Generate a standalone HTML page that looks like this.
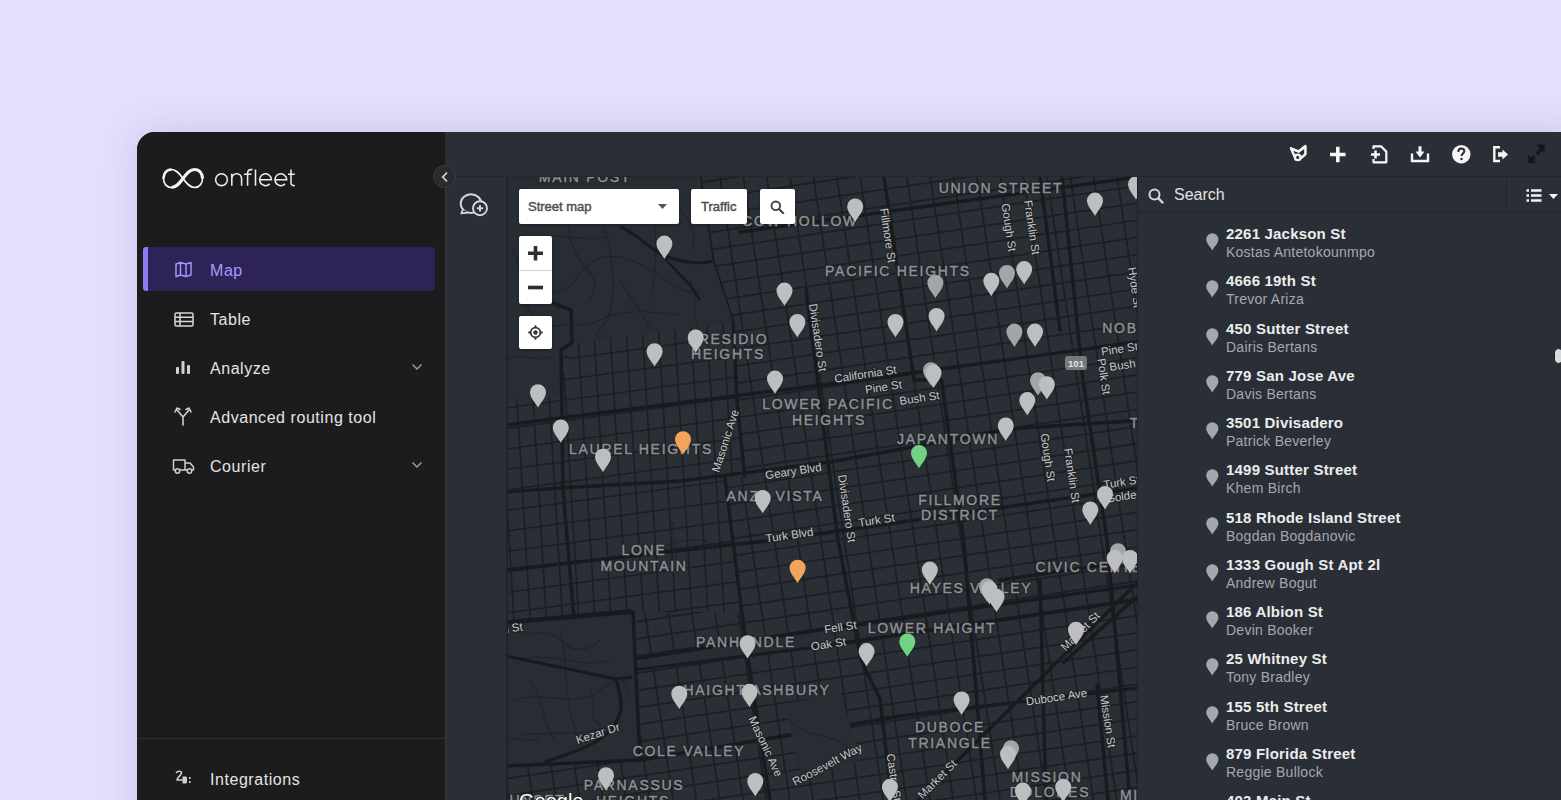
<!DOCTYPE html>
<html><head><meta charset="utf-8">
<style>
*{margin:0;padding:0;box-sizing:border-box}
html,body{width:1561px;height:800px;overflow:hidden;background:#e3dffc;font-family:"Liberation Sans",sans-serif}
.abs{position:absolute}
#app{position:absolute;left:137px;top:132px;width:1440px;height:700px;border-radius:18px 0 0 0;overflow:hidden;box-shadow:0 0 36px rgba(80,60,160,0.16);background:#1c1c1d}
#side{position:absolute;left:0;top:0;width:308px;height:700px;background:#1c1c1d}
.nav{position:absolute;left:0;width:308px;height:44px;color:#e4e4e4;font-size:16px;letter-spacing:0.55px}
.nav .t{position:absolute;left:73px;top:15px;line-height:18px;white-space:nowrap}
.nav svg{position:absolute}
#top{position:absolute;left:308px;top:0;width:1132px;height:45px;background:#2a2f37;border-bottom:1px solid #23272d}
#lcol{position:absolute;left:308px;top:45px;width:61px;height:655px;background:#2a2f37;border-left:1px solid #34373b}
#map{position:absolute;left:369px;top:45px;width:631px;height:623px;background:#2c3036;overflow:hidden}
#mapctl{position:absolute;left:369px;top:45px;width:300px;height:200px}
.ctl{background:#fff;border-radius:2px;box-shadow:0 1px 3px rgba(0,0,0,0.3)}
#rp{position:absolute;left:1000px;top:45px;width:440px;height:655px;background:#2a2f37;border-left:1px solid #1e2126}
.it{position:absolute;left:68px;width:360px;height:47px}
.it .a{position:absolute;left:20px;top:-2px;font-size:15px;font-weight:700;color:#ececec;letter-spacing:0.2px;white-space:nowrap;line-height:18px}
.it .b{position:absolute;left:20px;top:16px;font-size:14px;color:#a6a8ab;letter-spacing:0.25px;white-space:nowrap;line-height:18px}
.it svg{position:absolute;left:-0.5px;top:6px}
</style></head>
<body>
<div id="app">
  <div id="side">
    <!-- logo -->
    <svg class="abs" style="left:18px;top:30px" width="140" height="35" viewBox="155 162 140 35">
      <path d="M183 178.5 C187 173,190 169.5,194.5 169.5 C199.5 169.5,202.5 173.5,202.5 178.5 C202.5 183.5,199.5 187.5,194.5 187.5 C190 187.5,187 184,183 178.5 C179 173,176 169.5,171.5 169.5 C166.5 169.5,163.5 173.5,163.5 178.5 C163.5 183.5,166.5 187.5,171.5 187.5 C176 187.5,179 184,183 178.5Z" fill="none" stroke="#f4f4f4" stroke-width="1.7"/>
      <path d="M171.5 187.5 C176 187.5,179 184,183 178.5 C187 173,190 169.5,194.5 169.5 C199.5 169.5,202.5 173.5,202.5 178.5" fill="none" stroke="#f4f4f4" stroke-width="3"/>
      <path d="M163.5 178.5 C163.5 173.5,166.5 169.5,171.5 169.5" fill="none" stroke="#f4f4f4" stroke-width="2.6"/>
      <g fill="none" stroke="#ececec" stroke-width="1.55">
        <circle cx="221.5" cy="179.7" r="5.9"/>
        <path d="M231.8 185.7 V173.7 M231.8 179.5 C231.8 175.5,234 173.7,236.8 173.7 C239.8 173.7,241.6 175.5,241.6 179.5 V185.7"/>
        <path d="M247.6 185.7 V173.5 C247.6 170.8,249 169.6,251 169.6 H252.5 M244 174.2 H251.5"/>
        <path d="M255.5 169.4 V185.7"/>
        <path d="M259.6 179.7 H271.4 A5.9 5.9 0 1 0 269.7 183.9"/>
        <path d="M274.9 179.7 H286.7 A5.9 5.9 0 1 0 285 183.9"/>
        <path d="M291 169.4 V183 C291 185,292 185.7,294.8 185.7 M288 174.2 H294.8"/>
      </g>
    </svg>
    <div class="abs" style="left:8px;top:115px;width:290px;height:44px;background:#2e2357;border-radius:4px"></div>
    <div class="abs" style="left:6px;top:115px;width:5px;height:44px;background:#8b7cf5;border-radius:3px 0 0 3px"></div>
    <div class="nav" style="top:115px;color:#a89bf6">
      <svg style="left:38px;top:14px" width="17" height="17" viewBox="0 0 17 17"><path d="M1 3 L5.5 1.5 L11 3 L16 1.5 V14 L11 15.5 L5.5 14 L1 15.5Z M5.5 1.5 V14 M11 3 V15.5" fill="none" stroke="#a394f7" stroke-width="1.5" stroke-linejoin="round"/></svg>
      <span class="t">Map</span>
    </div>
    <div class="nav" style="top:164px">
      <svg style="left:37px;top:16px" width="20" height="15" viewBox="0 0 20 15"><rect x="1" y="1" width="18" height="13" rx="1.5" fill="none" stroke="#d8d8d8" stroke-width="1.5"/><path d="M1 5.3H19M1 9.6H19M6 1V14" stroke="#d8d8d8" stroke-width="1.5"/></svg>
      <span class="t">Table</span>
    </div>
    <div class="nav" style="top:213px">
      <svg style="left:38px;top:15px" width="16" height="15" viewBox="0 0 16 15"><rect x="1" y="7" width="3" height="7" rx="1" fill="#d0d0d0"/><rect x="6.5" y="1" width="3" height="13" rx="1" fill="#d0d0d0"/><rect x="12" y="5" width="3" height="9" rx="1" fill="#d0d0d0"/></svg>
      <span class="t">Analyze</span>
      <svg style="left:274px;top:18px" width="12" height="8" viewBox="0 0 12 8"><path d="M1.5 1.5 L6 6 L10.5 1.5" fill="none" stroke="#9a9a9a" stroke-width="1.5"/></svg>
    </div>
    <div class="nav" style="top:262px">
      <svg style="left:37px;top:12px" width="18" height="20" viewBox="0 0 18 20"><path d="M9 19 V11 L3 4 M9 11 L15 4 M1 6 L3 2 L6 3.5 M12 3.5 L15 2 L17 6" fill="none" stroke="#cfcfcf" stroke-width="1.6" stroke-linecap="round" stroke-linejoin="round"/></svg>
      <span class="t">Advanced routing tool</span>
    </div>
    <div class="nav" style="top:311px">
      <svg style="left:35px;top:15px" width="23" height="16" viewBox="0 0 23 16"><path d="M1.5 2 H13 V12 H1.5Z M13 5 H18 L21.5 9 V12 H13" fill="none" stroke="#cfcfcf" stroke-width="1.5" stroke-linejoin="round"/><circle cx="5.5" cy="13" r="2.2" fill="#1c1c1d" stroke="#cfcfcf" stroke-width="1.5"/><circle cx="17.5" cy="13" r="2.2" fill="#1c1c1d" stroke="#cfcfcf" stroke-width="1.5"/></svg>
      <span class="t">Courier</span>
      <svg style="left:274px;top:18px" width="12" height="8" viewBox="0 0 12 8"><path d="M1.5 1.5 L6 6 L10.5 1.5" fill="none" stroke="#9a9a9a" stroke-width="1.5"/></svg>
    </div>
    <div class="abs" style="left:0;top:606px;width:308px;height:1px;background:#2e2e30"></div>
    <div class="nav" style="top:624px">
      <svg style="left:37px;top:13px" width="20" height="18" viewBox="0 0 20 18"><path d="M2.5 3.5 C3.5 1.8,7.5 1.8,7.5 4 C7.5 6,3 8.5,3 11 H8" fill="none" stroke="#d0d0d0" stroke-width="1.6" stroke-linecap="round" stroke-linejoin="round"/><path d="M8.5 7.5 h3 a1.5 1.5 0 0 1 1.5 1.5 v4 a1.5 1.5 0 0 1 -1.5 1.5 h-3z" fill="#d0d0d0"/><circle cx="15.8" cy="9" r="1" fill="#d0d0d0"/><circle cx="15.8" cy="13" r="1" fill="#d0d0d0"/></svg>
      <span class="t">Integrations</span>
    </div>
  </div>

  <div id="top">
    <svg class="abs" style="left:0;top:0" width="1132" height="45" viewBox="445 132 1132 45">
      <!-- fox -->
      <path d="M1291 148.3 L1298.6 151.4 L1305.4 146 V154.3 L1300.8 158.2 M1291 148.3 L1295 157.6" fill="none" stroke="#f4f4f4" stroke-width="2.5" stroke-linejoin="round" stroke-linecap="round"/>
      <path d="M1292.5 149.5 L1298.6 152 L1304.5 148" fill="none" stroke="#f4f4f4" stroke-width="1.5"/>
      <circle cx="1297.7" cy="157.4" r="2.7" fill="none" stroke="#f4f4f4" stroke-width="2.3"/>
      <!-- plus -->
      <path d="M1337.8 146.8 V162.2 M1330 154.5 H1345.6" stroke="#f6f6f6" stroke-width="3.6"/>
      <!-- file plus -->
      <path d="M1373.5 149 V146.3 H1381 L1386.3 151.6 V162.3 H1373.5 V159" fill="none" stroke="#f6f6f6" stroke-width="2.2" stroke-linejoin="round"/>
      <path d="M1375.5 150.5 V158.5 M1371 154.5 H1380" stroke="#f6f6f6" stroke-width="2.6"/>
      <!-- download -->
      <path d="M1412 153.5 V161 H1428 V153.5" fill="none" stroke="#f6f6f6" stroke-width="2.4"/>
      <path d="M1420 146.3 V153" stroke="#f6f6f6" stroke-width="3"/>
      <path d="M1415.5 151.5 H1424.5 L1420 157.5Z" fill="#f6f6f6"/>
      <!-- help -->
      <circle cx="1461.3" cy="154.2" r="9.2" fill="#f6f6f6"/>
      <path d="M1458.3 152 C1458.3 149.6,1459.8 148.5,1461.3 148.5 C1463 148.5,1464.3 149.6,1464.3 151.3 C1464.3 153.4,1461.5 153.5,1461.5 156" fill="none" stroke="#2a2e34" stroke-width="2"/>
      <circle cx="1461.5" cy="159" r="1.2" fill="#2a2e34"/>
      <!-- sign out -->
      <path d="M1500 147.3 H1494.3 V161 H1500" fill="none" stroke="#f6f6f6" stroke-width="2.4"/>
      <path d="M1498 152.2 H1502.5 V149.5 L1508 154.5 L1502.5 159.5 V156.8 H1498Z" fill="#f6f6f6"/>
      <!-- expand -->
      <path d="M1529.5 161.5 L1534.5 156.5 M1537 154 L1542.5 148" stroke="#15171b" stroke-width="3.4"/>
      <path d="M1536 144.5 H1544.6 V153Z M1527.8 154.5 V163.3 H1536.5Z" fill="#15171b"/>
    </svg>
  </div>
  <div id="lcol">
    <div class="abs" style="left:3px;top:3px;width:52px;height:52px;border-bottom:1px solid #262a30"></div>
    <svg class="abs" style="left:-1px;top:0" width="61" height="80" viewBox="445 177 61 80">
      <ellipse cx="471" cy="203.6" rx="10.3" ry="9.4" fill="none" stroke="#d4d6d8" stroke-width="1.9"/>
      <path d="M463 209.5 L461.3 213.4 L468 212.6" fill="#2a2f37" stroke="#d4d6d8" stroke-width="1.8" stroke-linejoin="round" stroke-linecap="round"/>
      <circle cx="480" cy="208.2" r="7" fill="#2a2f37" stroke="#d4d6d8" stroke-width="1.9"/>
      <path d="M480 205 V211.4 M476.8 208.2 H483.2" stroke="#d4d6d8" stroke-width="1.9"/>
    </svg>
  </div>
  <div id="map"><svg width="631" height="623" viewBox="506 177 631 623" style="position:absolute;left:0;top:0">
<rect x="506" y="177" width="631" height="623" fill="#2a2f36"/>
<defs>
<clipPath id="cA"><path d="M506,398 L561,395 L572,343 L733,322 L745,476 L725,478 L740,612 L633,612 L506,623Z"/></clipPath>
<clipPath id="cB"><path clip-rule="evenodd" d="M506,177 L1137,177 L1137,800 L506,800Z M506,398 L561,395 L572,343 L733,322 L745,476 L725,478 L740,612 L633,612 L506,623Z"/></clipPath>
</defs>
<g clip-path="url(#cB)"><g transform="rotate(-8.5 821.0 488.0)" stroke="#1b1e23" stroke-width="1.7">
<line x1="466.8" y1="80" x2="466.8" y2="900"/>
<line x1="489.9" y1="80" x2="489.9" y2="900"/>
<line x1="513.0" y1="80" x2="513.0" y2="900"/>
<line x1="536.1" y1="80" x2="536.1" y2="900"/>
<line x1="559.2" y1="80" x2="559.2" y2="900"/>
<line x1="582.3" y1="80" x2="582.3" y2="900"/>
<line x1="605.4" y1="80" x2="605.4" y2="900"/>
<line x1="628.5" y1="80" x2="628.5" y2="900"/>
<line x1="651.6" y1="80" x2="651.6" y2="900"/>
<line x1="674.7" y1="80" x2="674.7" y2="900"/>
<line x1="697.8" y1="80" x2="697.8" y2="900"/>
<line x1="720.9" y1="80" x2="720.9" y2="900"/>
<line x1="744.0" y1="80" x2="744.0" y2="900"/>
<line x1="767.1" y1="80" x2="767.1" y2="900"/>
<line x1="790.2" y1="80" x2="790.2" y2="900"/>
<line x1="813.3" y1="80" x2="813.3" y2="900"/>
<line x1="836.4" y1="80" x2="836.4" y2="900"/>
<line x1="859.5" y1="80" x2="859.5" y2="900"/>
<line x1="882.6" y1="80" x2="882.6" y2="900"/>
<line x1="905.7" y1="80" x2="905.7" y2="900"/>
<line x1="928.8" y1="80" x2="928.8" y2="900"/>
<line x1="951.9" y1="80" x2="951.9" y2="900"/>
<line x1="975.0" y1="80" x2="975.0" y2="900"/>
<line x1="998.1" y1="80" x2="998.1" y2="900"/>
<line x1="1021.2" y1="80" x2="1021.2" y2="900"/>
<line x1="1044.3" y1="80" x2="1044.3" y2="900"/>
<line x1="1067.4" y1="80" x2="1067.4" y2="900"/>
<line x1="1090.5" y1="80" x2="1090.5" y2="900"/>
<line x1="1113.6" y1="80" x2="1113.6" y2="900"/>
<line x1="1136.7" y1="80" x2="1136.7" y2="900"/>
<line x1="1159.8" y1="80" x2="1159.8" y2="900"/>
<line x1="1182.9" y1="80" x2="1182.9" y2="900"/>
<line x1="1206.0" y1="80" x2="1206.0" y2="900"/>
<line x1="1229.1" y1="80" x2="1229.1" y2="900"/>
<line x1="1252.2" y1="80" x2="1252.2" y2="900"/>
<line x1="1275.3" y1="80" x2="1275.3" y2="900"/>
<line x1="1298.4" y1="80" x2="1298.4" y2="900"/>
<line x1="1321.5" y1="80" x2="1321.5" y2="900"/>
<line x1="1344.6" y1="80" x2="1344.6" y2="900"/>
<line x1="1367.7" y1="80" x2="1367.7" y2="900"/>
<line x1="380" y1="-87.1" x2="1300" y2="-87.1"/>
<line x1="380" y1="-70.1" x2="1300" y2="-70.1"/>
<line x1="380" y1="-53.1" x2="1300" y2="-53.1"/>
<line x1="380" y1="-36.1" x2="1300" y2="-36.1"/>
<line x1="380" y1="-19.1" x2="1300" y2="-19.1"/>
<line x1="380" y1="-2.1" x2="1300" y2="-2.1"/>
<line x1="380" y1="14.9" x2="1300" y2="14.9"/>
<line x1="380" y1="31.9" x2="1300" y2="31.9"/>
<line x1="380" y1="48.9" x2="1300" y2="48.9"/>
<line x1="380" y1="65.9" x2="1300" y2="65.9"/>
<line x1="380" y1="82.9" x2="1300" y2="82.9"/>
<line x1="380" y1="99.9" x2="1300" y2="99.9"/>
<line x1="380" y1="116.9" x2="1300" y2="116.9"/>
<line x1="380" y1="133.9" x2="1300" y2="133.9"/>
<line x1="380" y1="150.9" x2="1300" y2="150.9"/>
<line x1="380" y1="167.9" x2="1300" y2="167.9"/>
<line x1="380" y1="184.9" x2="1300" y2="184.9"/>
<line x1="380" y1="201.9" x2="1300" y2="201.9"/>
<line x1="380" y1="218.9" x2="1300" y2="218.9"/>
<line x1="380" y1="235.9" x2="1300" y2="235.9"/>
<line x1="380" y1="252.9" x2="1300" y2="252.9"/>
<line x1="380" y1="269.9" x2="1300" y2="269.9"/>
<line x1="380" y1="286.9" x2="1300" y2="286.9"/>
<line x1="380" y1="303.9" x2="1300" y2="303.9"/>
<line x1="380" y1="320.9" x2="1300" y2="320.9"/>
<line x1="380" y1="337.9" x2="1300" y2="337.9"/>
<line x1="380" y1="354.9" x2="1300" y2="354.9"/>
<line x1="380" y1="371.9" x2="1300" y2="371.9"/>
<line x1="380" y1="388.9" x2="1300" y2="388.9"/>
<line x1="380" y1="405.9" x2="1300" y2="405.9"/>
<line x1="380" y1="422.9" x2="1300" y2="422.9"/>
<line x1="380" y1="439.9" x2="1300" y2="439.9"/>
<line x1="380" y1="456.9" x2="1300" y2="456.9"/>
<line x1="380" y1="473.9" x2="1300" y2="473.9"/>
<line x1="380" y1="490.9" x2="1300" y2="490.9"/>
<line x1="380" y1="507.9" x2="1300" y2="507.9"/>
<line x1="380" y1="524.9" x2="1300" y2="524.9"/>
<line x1="380" y1="541.9" x2="1300" y2="541.9"/>
<line x1="380" y1="558.9" x2="1300" y2="558.9"/>
<line x1="380" y1="575.9" x2="1300" y2="575.9"/>
<line x1="380" y1="592.9" x2="1300" y2="592.9"/>
<line x1="380" y1="609.9" x2="1300" y2="609.9"/>
<line x1="380" y1="626.9" x2="1300" y2="626.9"/>
<line x1="380" y1="643.9" x2="1300" y2="643.9"/>
<line x1="380" y1="660.9" x2="1300" y2="660.9"/>
<line x1="380" y1="677.9" x2="1300" y2="677.9"/>
<line x1="380" y1="694.9" x2="1300" y2="694.9"/>
<line x1="380" y1="711.9" x2="1300" y2="711.9"/>
<line x1="380" y1="728.9" x2="1300" y2="728.9"/>
<line x1="380" y1="745.9" x2="1300" y2="745.9"/>
<line x1="380" y1="762.9" x2="1300" y2="762.9"/>
<line x1="380" y1="779.9" x2="1300" y2="779.9"/>
<line x1="380" y1="796.9" x2="1300" y2="796.9"/>
<line x1="380" y1="813.9" x2="1300" y2="813.9"/>
<line x1="380" y1="830.9" x2="1300" y2="830.9"/>
<line x1="380" y1="847.9" x2="1300" y2="847.9"/>
<line x1="380" y1="864.9" x2="1300" y2="864.9"/>
<line x1="380" y1="881.9" x2="1300" y2="881.9"/>
<line x1="380" y1="898.9" x2="1300" y2="898.9"/>
<line x1="380" y1="915.9" x2="1300" y2="915.9"/>
</g></g>
<g clip-path="url(#cA)" stroke="#1b1e23" stroke-width="1.6">
<line x1="478.6" y1="300" x2="499.6" y2="650"/>
<line x1="494.8" y1="300" x2="515.8" y2="650"/>
<line x1="511.0" y1="300" x2="532.0" y2="650"/>
<line x1="527.2" y1="300" x2="548.2" y2="650"/>
<line x1="543.4" y1="300" x2="564.4" y2="650"/>
<line x1="559.6" y1="300" x2="580.6" y2="650"/>
<line x1="575.8" y1="300" x2="596.8" y2="650"/>
<line x1="592.0" y1="300" x2="613.0" y2="650"/>
<line x1="608.2" y1="300" x2="629.2" y2="650"/>
<line x1="624.4" y1="300" x2="645.4" y2="650"/>
<line x1="640.6" y1="300" x2="661.6" y2="650"/>
<line x1="656.8" y1="300" x2="677.8" y2="650"/>
<line x1="673.0" y1="300" x2="694.0" y2="650"/>
<line x1="689.2" y1="300" x2="710.2" y2="650"/>
<line x1="705.4" y1="300" x2="726.4" y2="650"/>
<line x1="721.6" y1="300" x2="742.6" y2="650"/>
<line x1="737.8" y1="300" x2="758.8" y2="650"/>
<line x1="754.0" y1="300" x2="775.0" y2="650"/>
<line x1="506" y1="285.0" x2="760" y2="250.7"/>
<line x1="506" y1="305.5" x2="760" y2="271.2"/>
<line x1="506" y1="326.0" x2="760" y2="291.7"/>
<line x1="506" y1="346.5" x2="760" y2="312.2"/>
<line x1="506" y1="367.0" x2="760" y2="332.7"/>
<line x1="506" y1="387.5" x2="760" y2="353.2"/>
<line x1="506" y1="408.0" x2="760" y2="373.7"/>
<line x1="506" y1="428.5" x2="760" y2="394.2"/>
<line x1="506" y1="449.0" x2="760" y2="414.7"/>
<line x1="506" y1="469.5" x2="760" y2="435.2"/>
<line x1="506" y1="490.0" x2="760" y2="455.7"/>
<line x1="506" y1="510.5" x2="760" y2="476.2"/>
<line x1="506" y1="531.0" x2="760" y2="496.7"/>
<line x1="506" y1="551.5" x2="760" y2="517.2"/>
<line x1="506" y1="572.0" x2="760" y2="537.7"/>
<line x1="506" y1="592.5" x2="760" y2="558.2"/>
<line x1="506" y1="613.0" x2="760" y2="578.7"/>
<line x1="506" y1="633.5" x2="760" y2="599.2"/>
<line x1="506" y1="654.0" x2="760" y2="619.7"/>
<line x1="506" y1="674.5" x2="760" y2="640.2"/>
<line x1="506" y1="695.0" x2="760" y2="660.7"/>
<line x1="506" y1="715.5" x2="760" y2="681.2"/>
</g>
<polyline points="700,177 713,261 733,322 737,400 744.5,476" fill="none" stroke="#171a1e" stroke-width="3.4" stroke-linejoin="round" stroke-linecap="round"/>
<polyline points="725,478 746,645 770,800" fill="none" stroke="#171a1e" stroke-width="3.4" stroke-linejoin="round" stroke-linecap="round"/>
<polyline points="806,290 838,540 861,660 880,699 892,800" fill="none" stroke="#171a1e" stroke-width="3.4" stroke-linejoin="round" stroke-linecap="round"/>
<polyline points="884,177 914,380 941.5,380 963.7,540 985,800" fill="none" stroke="#171a1e" stroke-width="3.4" stroke-linejoin="round" stroke-linecap="round"/>
<polyline points="1062,177 1083,380 1107,540 1130,800" fill="none" stroke="#171a1e" stroke-width="3.4" stroke-linejoin="round" stroke-linecap="round"/>
<polyline points="1040,177 1060,330" fill="none" stroke="#171a1e" stroke-width="3.4" stroke-linejoin="round" stroke-linecap="round"/>
<polyline points="506,425 560,418 830,384 1138,342" fill="none" stroke="#171a1e" stroke-width="3.4" stroke-linejoin="round" stroke-linecap="round"/>
<polyline points="506,492 560,488 680,481 830,462 1014,428.6 1138,420.5" fill="none" stroke="#171a1e" stroke-width="3.4" stroke-linejoin="round" stroke-linecap="round"/>
<polyline points="506,570 560,564 780,539.5 1138,488" fill="none" stroke="#171a1e" stroke-width="3.4" stroke-linejoin="round" stroke-linecap="round"/>
<polyline points="637.5,658.5 820,630 1138,585" fill="none" stroke="#171a1e" stroke-width="3.4" stroke-linejoin="round" stroke-linecap="round"/>
<polyline points="600,675 637.5,669 820,646.5 1138,600" fill="none" stroke="#171a1e" stroke-width="3.4" stroke-linejoin="round" stroke-linecap="round"/>
<polyline points="740,232 1138,177" fill="none" stroke="#171a1e" stroke-width="3.4" stroke-linejoin="round" stroke-linecap="round"/>
<polyline points="642,760 900,716 1138,688" fill="none" stroke="#171a1e" stroke-width="3.4" stroke-linejoin="round" stroke-linecap="round"/>
<polyline points="1064,662 1140,594" fill="none" stroke="#171a1e" stroke-width="3.4" stroke-linejoin="round" stroke-linecap="round"/>
<polyline points="1097,685 1108,800" fill="none" stroke="#171a1e" stroke-width="3.4" stroke-linejoin="round" stroke-linecap="round"/>
<polyline points="1040,580 1046,800" fill="none" stroke="#171a1e" stroke-width="3.4" stroke-linejoin="round" stroke-linecap="round"/>
<polyline points="1000,580 1138,560" fill="none" stroke="#171a1e" stroke-width="3.4" stroke-linejoin="round" stroke-linecap="round"/>
<polyline points="918,800 1140,580" fill="none" stroke="#171a1e" stroke-width="3.4" stroke-linejoin="round" stroke-linecap="round"/>
<polyline points="506,622 630,611" fill="none" stroke="#171a1e" stroke-width="3.4" stroke-linejoin="round" stroke-linecap="round"/>
<polygon points="506,177 700,177 713,261 733,322 572,343 561,350 561,395 506,400" fill="#282c33"/>
<polygon points="506,623 633,612 640,760 506,766" fill="#282c33"/>
<polygon points="639,660 820,632 820,645 639,668" fill="#282c33"/>
<polygon points="785,705 840,690 860,760 800,775" fill="#282c33"/>
<g fill="none" stroke="#202328" stroke-width="1.2">
<path d="M520 300 C540 290,560 300,575 280 S600 250,630 260 S680 300,700 290"/>
<path d="M600 220 C610 240,615 270,612 300 S590 330,600 340"/>
<path d="M650 190 C655 220,660 260,650 300"/>
<path d="M530 240 C560 230,590 245,610 235"/>
<path d="M540 330 C560 320,580 330,600 320 S640 310,680 315"/>
<path d="M560 190 C570 210,565 240,580 260 S600 280,590 300"/>
<path d="M690 280 C700 300,690 320,700 330"/>
<path d="M512 250 C525 270,520 300,535 320"/>
<path d="M520 660 C550 650,580 670,610 660"/>
<path d="M515 700 C545 690,575 710,600 690 S625 680,630 700"/>
<path d="M520 735 C550 730,590 740,625 720"/>
<path d="M560 630 C570 660,560 700,580 740"/>
<path d="M660 548 C680 540,700 536,712 545 L714 552"/>
<path d="M672 522 L676 560"/>
<path d="M790 720 C805 740,830 730,850 750"/>
<path d="M512 630 C530 640,545 625,560 640 S590 650,600 640"/>
<path d="M530 680 C545 700,540 720,555 740"/>
<path d="M590 690 C600 705,585 715,600 725"/>
<path d="M508 740 C520 735,530 745,540 738"/>
<path d="M580 200 C590 215,600 210,610 225"/>
<path d="M620 280 C630 300,640 305,650 330"/>
<path d="M506 360 C520 350,535 365,555 355"/>
<path d="M670 200 C690 215,700 240,690 250"/>
<path d="M540 270 C550 280,545 300,560 310"/>
</g>
<path d="M620 227 C640 235,650 250,665 256 S700 265,713 261" fill="none" stroke="#171a1e" stroke-width="3"/>
<path d="M664 258 L690 285 L700 300" fill="none" stroke="#171a1e" stroke-width="2.5"/>
<polyline points="553,303 571,310 572,343 561,350 563,490 574,618" fill="none" stroke="#171a1e" stroke-width="3.4" stroke-linejoin="round" stroke-linecap="round"/>
<polyline points="506,623 633,612 640,760 506,766" fill="none" stroke="#171a1e" stroke-width="3.4" stroke-linejoin="round" stroke-linecap="round"/>
<path d="M506 656 L616 679 L632 677" fill="none" stroke="#171a1e" stroke-width="3"/>
<path d="M616 679 C622 700,625 712,612 728 S580 750,545 762" fill="none" stroke="#171a1e" stroke-width="3"/>
<g fill="none" stroke="#1f2227" stroke-width="2.6" stroke-linejoin="round" font-size="14" letter-spacing="1.7" text-anchor="middle" font-family="Liberation Sans">
<text x="1001" y="193">UNION STREET</text>
<text x="800" y="226">COW HOLLOW</text>
<text x="898" y="276">PACIFIC HEIGHTS</text>
<text x="728" y="344">PRESIDIO</text>
<text x="728" y="359">HEIGHTS</text>
<text x="1120" y="333">NOB</text>
<text x="828" y="409">LOWER PACIFIC</text>
<text x="829" y="425">HEIGHTS</text>
<text x="948" y="444">JAPANTOWN</text>
<text x="641" y="454">LAUREL HEIGHTS</text>
<text x="775" y="501">ANZA VISTA</text>
<text x="960" y="505">FILLMORE</text>
<text x="960" y="520">DISTRICT</text>
<text x="644" y="555">LONE</text>
<text x="644" y="571">MOUNTAIN</text>
<text x="1095" y="572">CIVIC CENTER</text>
<text x="971" y="593">HAYES VALLEY</text>
<text x="746" y="647">PANHANDLE</text>
<text x="932" y="633">LOWER HAIGHT</text>
<text x="757" y="695">HAIGHT ASHBURY</text>
<text x="950" y="732">DUBOCE</text>
<text x="950" y="748">TRIANGLE</text>
<text x="689" y="756">COLE VALLEY</text>
<text x="634" y="790">PARNASSUS</text>
<text x="633" y="806">HEIGHTS</text>
<text x="1047" y="782">MISSION</text>
<text x="1050" y="797">DOLORES</text>
<text x="1135" y="800">MIS</text>
<text x="1135" y="428">T</text>
<text x="585" y="182">MAIN POST</text>
<text x="532" y="805">SUNSET</text>
</g>
<g fill="#8e9094" stroke="#8e9094" stroke-width="0.45" font-size="14" letter-spacing="1.7" text-anchor="middle" font-family="Liberation Sans">
<text x="1001" y="193">UNION STREET</text>
<text x="800" y="226">COW HOLLOW</text>
<text x="898" y="276">PACIFIC HEIGHTS</text>
<text x="728" y="344">PRESIDIO</text>
<text x="728" y="359">HEIGHTS</text>
<text x="1120" y="333">NOB</text>
<text x="828" y="409">LOWER PACIFIC</text>
<text x="829" y="425">HEIGHTS</text>
<text x="948" y="444">JAPANTOWN</text>
<text x="641" y="454">LAUREL HEIGHTS</text>
<text x="775" y="501">ANZA VISTA</text>
<text x="960" y="505">FILLMORE</text>
<text x="960" y="520">DISTRICT</text>
<text x="644" y="555">LONE</text>
<text x="644" y="571">MOUNTAIN</text>
<text x="1095" y="572">CIVIC CENTER</text>
<text x="971" y="593">HAYES VALLEY</text>
<text x="746" y="647">PANHANDLE</text>
<text x="932" y="633">LOWER HAIGHT</text>
<text x="757" y="695">HAIGHT ASHBURY</text>
<text x="950" y="732">DUBOCE</text>
<text x="950" y="748">TRIANGLE</text>
<text x="689" y="756">COLE VALLEY</text>
<text x="634" y="790">PARNASSUS</text>
<text x="633" y="806">HEIGHTS</text>
<text x="1047" y="782">MISSION</text>
<text x="1050" y="797">DOLORES</text>
<text x="1135" y="800">MIS</text>
<text x="1135" y="428">T</text>
<text x="585" y="182">MAIN POST</text>
<text x="532" y="805">SUNSET</text>
</g>
<text transform="translate(884 236) rotate(81.5)" fill="#c6c7c9" stroke="#1f2227" stroke-width="2.2" paint-order="stroke" stroke-linejoin="round" font-size="11.5" text-anchor="middle" font-family="Liberation Sans">Fillmore St</text>
<text transform="translate(1005 228) rotate(81.5)" fill="#c6c7c9" stroke="#1f2227" stroke-width="2.2" paint-order="stroke" stroke-linejoin="round" font-size="11.5" text-anchor="middle" font-family="Liberation Sans">Gough St</text>
<text transform="translate(1028 228) rotate(81.5)" fill="#c6c7c9" stroke="#1f2227" stroke-width="2.2" paint-order="stroke" stroke-linejoin="round" font-size="11.5" text-anchor="middle" font-family="Liberation Sans">Franklin St</text>
<text transform="translate(1131 288) rotate(81.5)" fill="#c6c7c9" stroke="#1f2227" stroke-width="2.2" paint-order="stroke" stroke-linejoin="round" font-size="11.5" text-anchor="middle" font-family="Liberation Sans">Hyde St</text>
<text transform="translate(814 338) rotate(81.5)" fill="#c6c7c9" stroke="#1f2227" stroke-width="2.2" paint-order="stroke" stroke-linejoin="round" font-size="11.5" text-anchor="middle" font-family="Liberation Sans">Divisadero St</text>
<text transform="translate(866 378) rotate(-8.5)" fill="#c6c7c9" stroke="#1f2227" stroke-width="2.2" paint-order="stroke" stroke-linejoin="round" font-size="11.5" text-anchor="middle" font-family="Liberation Sans">California St</text>
<text transform="translate(884 391) rotate(-8.5)" fill="#c6c7c9" stroke="#1f2227" stroke-width="2.2" paint-order="stroke" stroke-linejoin="round" font-size="11.5" text-anchor="middle" font-family="Liberation Sans">Pine St</text>
<text transform="translate(920 402) rotate(-8.5)" fill="#c6c7c9" stroke="#1f2227" stroke-width="2.2" paint-order="stroke" stroke-linejoin="round" font-size="11.5" text-anchor="middle" font-family="Liberation Sans">Bush St</text>
<text transform="translate(1120 353) rotate(-8.5)" fill="#c6c7c9" stroke="#1f2227" stroke-width="2.2" paint-order="stroke" stroke-linejoin="round" font-size="11.5" text-anchor="middle" font-family="Liberation Sans">Pine St</text>
<text transform="translate(1130 368) rotate(-8.5)" fill="#c6c7c9" stroke="#1f2227" stroke-width="2.2" paint-order="stroke" stroke-linejoin="round" font-size="11.5" text-anchor="middle" font-family="Liberation Sans">Bush St</text>
<text transform="translate(1100 377) rotate(81.5)" fill="#c6c7c9" stroke="#1f2227" stroke-width="2.2" paint-order="stroke" stroke-linejoin="round" font-size="11.5" text-anchor="middle" font-family="Liberation Sans">Polk St</text>
<text transform="translate(729 442) rotate(-72)" fill="#c6c7c9" stroke="#1f2227" stroke-width="2.2" paint-order="stroke" stroke-linejoin="round" font-size="11.5" text-anchor="middle" font-family="Liberation Sans">Masonic Ave</text>
<text transform="translate(794 475) rotate(-8.5)" fill="#c6c7c9" stroke="#1f2227" stroke-width="2.2" paint-order="stroke" stroke-linejoin="round" font-size="11.5" text-anchor="middle" font-family="Liberation Sans">Geary Blvd</text>
<text transform="translate(1044 458) rotate(81.5)" fill="#c6c7c9" stroke="#1f2227" stroke-width="2.2" paint-order="stroke" stroke-linejoin="round" font-size="11.5" text-anchor="middle" font-family="Liberation Sans">Gough St</text>
<text transform="translate(1068 476) rotate(81.5)" fill="#c6c7c9" stroke="#1f2227" stroke-width="2.2" paint-order="stroke" stroke-linejoin="round" font-size="11.5" text-anchor="middle" font-family="Liberation Sans">Franklin St</text>
<text transform="translate(1122 486) rotate(-8.5)" fill="#c6c7c9" stroke="#1f2227" stroke-width="2.2" paint-order="stroke" stroke-linejoin="round" font-size="11.5" text-anchor="middle" font-family="Liberation Sans">Turk St</text>
<text transform="translate(843 509) rotate(81.5)" fill="#c6c7c9" stroke="#1f2227" stroke-width="2.2" paint-order="stroke" stroke-linejoin="round" font-size="11.5" text-anchor="middle" font-family="Liberation Sans">Divisadero St</text>
<text transform="translate(877 524) rotate(-8.5)" fill="#c6c7c9" stroke="#1f2227" stroke-width="2.2" paint-order="stroke" stroke-linejoin="round" font-size="11.5" text-anchor="middle" font-family="Liberation Sans">Turk St</text>
<text transform="translate(790 539) rotate(-8.5)" fill="#c6c7c9" stroke="#1f2227" stroke-width="2.2" paint-order="stroke" stroke-linejoin="round" font-size="11.5" text-anchor="middle" font-family="Liberation Sans">Turk Blvd</text>
<text transform="translate(841 631) rotate(-8.5)" fill="#c6c7c9" stroke="#1f2227" stroke-width="2.2" paint-order="stroke" stroke-linejoin="round" font-size="11.5" text-anchor="middle" font-family="Liberation Sans">Fell St</text>
<text transform="translate(829 648) rotate(-8.5)" fill="#c6c7c9" stroke="#1f2227" stroke-width="2.2" paint-order="stroke" stroke-linejoin="round" font-size="11.5" text-anchor="middle" font-family="Liberation Sans">Oak St</text>
<text transform="translate(1083 634) rotate(-45)" fill="#c6c7c9" stroke="#1f2227" stroke-width="2.2" paint-order="stroke" stroke-linejoin="round" font-size="11.5" text-anchor="middle" font-family="Liberation Sans">Market St</text>
<text transform="translate(1057 701) rotate(-8.5)" fill="#c6c7c9" stroke="#1f2227" stroke-width="2.2" paint-order="stroke" stroke-linejoin="round" font-size="11.5" text-anchor="middle" font-family="Liberation Sans">Duboce Ave</text>
<text transform="translate(1104 722) rotate(81.5)" fill="#c6c7c9" stroke="#1f2227" stroke-width="2.2" paint-order="stroke" stroke-linejoin="round" font-size="11.5" text-anchor="middle" font-family="Liberation Sans">Mission St</text>
<text transform="translate(599 737) rotate(-18)" fill="#c6c7c9" stroke="#1f2227" stroke-width="2.2" paint-order="stroke" stroke-linejoin="round" font-size="11.5" text-anchor="middle" font-family="Liberation Sans">Kezar Dr</text>
<text transform="translate(762 748) rotate(65)" fill="#c6c7c9" stroke="#1f2227" stroke-width="2.2" paint-order="stroke" stroke-linejoin="round" font-size="11.5" text-anchor="middle" font-family="Liberation Sans">Masonic Ave</text>
<text transform="translate(829 768) rotate(-28)" fill="#c6c7c9" stroke="#1f2227" stroke-width="2.2" paint-order="stroke" stroke-linejoin="round" font-size="11.5" text-anchor="middle" font-family="Liberation Sans">Roosevelt Way</text>
<text transform="translate(890 778) rotate(81.5)" fill="#c6c7c9" stroke="#1f2227" stroke-width="2.2" paint-order="stroke" stroke-linejoin="round" font-size="11.5" text-anchor="middle" font-family="Liberation Sans">Castro St</text>
<text transform="translate(940 782) rotate(-45)" fill="#c6c7c9" stroke="#1f2227" stroke-width="2.2" paint-order="stroke" stroke-linejoin="round" font-size="11.5" text-anchor="middle" font-family="Liberation Sans">Market St</text>
<text transform="translate(513 632) rotate(-8.5)" fill="#c6c7c9" stroke="#1f2227" stroke-width="2.2" paint-order="stroke" stroke-linejoin="round" font-size="11.5" text-anchor="middle" font-family="Liberation Sans">h St</text>
<text transform="translate(1125 500) rotate(-8.5)" fill="#c6c7c9" stroke="#1f2227" stroke-width="2.2" paint-order="stroke" stroke-linejoin="round" font-size="11.5" text-anchor="middle" font-family="Liberation Sans">Golden</text>
<rect x="1065" y="356" width="22" height="14" rx="3" fill="#76787b"/>
<text x="1076" y="367" fill="#e4e4e4" font-size="9.5" text-anchor="middle" font-family="Liberation Sans" font-weight="700">101</text>
<path transform="translate(664.4 243.6)" d="M0 15.4 C-2.6 10.6,-8 5.4,-8 0 A8 8 0 0 1 8 0 C8 5.4,2.6 10.6,0 15.4Z" fill="#bdbec0"/>
<path transform="translate(784.5 290.6)" d="M0 15.4 C-2.6 10.6,-8 5.4,-8 0 A8 8 0 0 1 8 0 C8 5.4,2.6 10.6,0 15.4Z" fill="#bdbec0"/>
<path transform="translate(797.4 321.9)" d="M0 15.4 C-2.6 10.6,-8 5.4,-8 0 A8 8 0 0 1 8 0 C8 5.4,2.6 10.6,0 15.4Z" fill="#bdbec0"/>
<path transform="translate(695.7 337.5)" d="M0 15.4 C-2.6 10.6,-8 5.4,-8 0 A8 8 0 0 1 8 0 C8 5.4,2.6 10.6,0 15.4Z" fill="#bdbec0"/>
<path transform="translate(654.6 351.2)" d="M0 15.4 C-2.6 10.6,-8 5.4,-8 0 A8 8 0 0 1 8 0 C8 5.4,2.6 10.6,0 15.4Z" fill="#bdbec0"/>
<path transform="translate(775.0 378.6)" d="M0 15.4 C-2.6 10.6,-8 5.4,-8 0 A8 8 0 0 1 8 0 C8 5.4,2.6 10.6,0 15.4Z" fill="#bdbec0"/>
<path transform="translate(538.0 392.2)" d="M0 15.4 C-2.6 10.6,-8 5.4,-8 0 A8 8 0 0 1 8 0 C8 5.4,2.6 10.6,0 15.4Z" fill="#bdbec0"/>
<path transform="translate(560.8 427.4)" d="M0 15.4 C-2.6 10.6,-8 5.4,-8 0 A8 8 0 0 1 8 0 C8 5.4,2.6 10.6,0 15.4Z" fill="#bdbec0"/>
<path transform="translate(603.0 456.8)" d="M0 15.4 C-2.6 10.6,-8 5.4,-8 0 A8 8 0 0 1 8 0 C8 5.4,2.6 10.6,0 15.4Z" fill="#bdbec0"/>
<path transform="translate(855.2 206.5)" d="M0 15.4 C-2.6 10.6,-8 5.4,-8 0 A8 8 0 0 1 8 0 C8 5.4,2.6 10.6,0 15.4Z" fill="#bdbec0"/>
<path transform="translate(1095.0 200.6)" d="M0 15.4 C-2.6 10.6,-8 5.4,-8 0 A8 8 0 0 1 8 0 C8 5.4,2.6 10.6,0 15.4Z" fill="#bdbec0"/>
<path transform="translate(1136.0 184.2)" d="M0 15.4 C-2.6 10.6,-8 5.4,-8 0 A8 8 0 0 1 8 0 C8 5.4,2.6 10.6,0 15.4Z" fill="#bdbec0"/>
<path transform="translate(935.4 282.7)" d="M0 15.4 C-2.6 10.6,-8 5.4,-8 0 A8 8 0 0 1 8 0 C8 5.4,2.6 10.6,0 15.4Z" fill="#a3a5a8"/>
<path transform="translate(991.3 280.8)" d="M0 15.4 C-2.6 10.6,-8 5.4,-8 0 A8 8 0 0 1 8 0 C8 5.4,2.6 10.6,0 15.4Z" fill="#bdbec0"/>
<path transform="translate(1007.0 273.0)" d="M0 15.4 C-2.6 10.6,-8 5.4,-8 0 A8 8 0 0 1 8 0 C8 5.4,2.6 10.6,0 15.4Z" fill="#a3a5a8"/>
<path transform="translate(1024.2 269.1)" d="M0 15.4 C-2.6 10.6,-8 5.4,-8 0 A8 8 0 0 1 8 0 C8 5.4,2.6 10.6,0 15.4Z" fill="#bdbec0"/>
<path transform="translate(895.5 321.9)" d="M0 15.4 C-2.6 10.6,-8 5.4,-8 0 A8 8 0 0 1 8 0 C8 5.4,2.6 10.6,0 15.4Z" fill="#bdbec0"/>
<path transform="translate(936.6 316.0)" d="M0 15.4 C-2.6 10.6,-8 5.4,-8 0 A8 8 0 0 1 8 0 C8 5.4,2.6 10.6,0 15.4Z" fill="#bdbec0"/>
<path transform="translate(1014.4 331.6)" d="M0 15.4 C-2.6 10.6,-8 5.4,-8 0 A8 8 0 0 1 8 0 C8 5.4,2.6 10.6,0 15.4Z" fill="#a3a5a8"/>
<path transform="translate(1035.0 331.6)" d="M0 15.4 C-2.6 10.6,-8 5.4,-8 0 A8 8 0 0 1 8 0 C8 5.4,2.6 10.6,0 15.4Z" fill="#bdbec0"/>
<path transform="translate(931.0 370.2)" d="M0 15.4 C-2.6 10.6,-8 5.4,-8 0 A8 8 0 0 1 8 0 C8 5.4,2.6 10.6,0 15.4Z" fill="#a3a5a8"/>
<path transform="translate(933.5 372.7)" d="M0 15.4 C-2.6 10.6,-8 5.4,-8 0 A8 8 0 0 1 8 0 C8 5.4,2.6 10.6,0 15.4Z" fill="#bdbec0"/>
<path transform="translate(1038.0 380.2)" d="M0 15.4 C-2.6 10.6,-8 5.4,-8 0 A8 8 0 0 1 8 0 C8 5.4,2.6 10.6,0 15.4Z" fill="#a3a5a8"/>
<path transform="translate(1046.9 384.2)" d="M0 15.4 C-2.6 10.6,-8 5.4,-8 0 A8 8 0 0 1 8 0 C8 5.4,2.6 10.6,0 15.4Z" fill="#bdbec0"/>
<path transform="translate(1027.3 400.1)" d="M0 15.4 C-2.6 10.6,-8 5.4,-8 0 A8 8 0 0 1 8 0 C8 5.4,2.6 10.6,0 15.4Z" fill="#bdbec0"/>
<path transform="translate(1005.8 425.5)" d="M0 15.4 C-2.6 10.6,-8 5.4,-8 0 A8 8 0 0 1 8 0 C8 5.4,2.6 10.6,0 15.4Z" fill="#bdbec0"/>
<path transform="translate(762.7 497.9)" d="M0 15.4 C-2.6 10.6,-8 5.4,-8 0 A8 8 0 0 1 8 0 C8 5.4,2.6 10.6,0 15.4Z" fill="#bdbec0"/>
<path transform="translate(747.6 643.2)" d="M0 15.4 C-2.6 10.6,-8 5.4,-8 0 A8 8 0 0 1 8 0 C8 5.4,2.6 10.6,0 15.4Z" fill="#bdbec0"/>
<path transform="translate(679.3 693.7)" d="M0 15.4 C-2.6 10.6,-8 5.4,-8 0 A8 8 0 0 1 8 0 C8 5.4,2.6 10.6,0 15.4Z" fill="#bdbec0"/>
<path transform="translate(749.5 691.8)" d="M0 15.4 C-2.6 10.6,-8 5.4,-8 0 A8 8 0 0 1 8 0 C8 5.4,2.6 10.6,0 15.4Z" fill="#bdbec0"/>
<path transform="translate(606.0 775.2)" d="M0 15.4 C-2.6 10.6,-8 5.4,-8 0 A8 8 0 0 1 8 0 C8 5.4,2.6 10.6,0 15.4Z" fill="#bdbec0"/>
<path transform="translate(755.3 780.9)" d="M0 15.4 C-2.6 10.6,-8 5.4,-8 0 A8 8 0 0 1 8 0 C8 5.4,2.6 10.6,0 15.4Z" fill="#bdbec0"/>
<path transform="translate(1105.0 494.0)" d="M0 15.4 C-2.6 10.6,-8 5.4,-8 0 A8 8 0 0 1 8 0 C8 5.4,2.6 10.6,0 15.4Z" fill="#bdbec0"/>
<path transform="translate(1090.3 509.5)" d="M0 15.4 C-2.6 10.6,-8 5.4,-8 0 A8 8 0 0 1 8 0 C8 5.4,2.6 10.6,0 15.4Z" fill="#bdbec0"/>
<path transform="translate(929.8 569.6)" d="M0 15.4 C-2.6 10.6,-8 5.4,-8 0 A8 8 0 0 1 8 0 C8 5.4,2.6 10.6,0 15.4Z" fill="#bdbec0"/>
<path transform="translate(1118.0 551.2)" d="M0 15.4 C-2.6 10.6,-8 5.4,-8 0 A8 8 0 0 1 8 0 C8 5.4,2.6 10.6,0 15.4Z" fill="#a3a5a8"/>
<path transform="translate(1114.7 558.0)" d="M0 15.4 C-2.6 10.6,-8 5.4,-8 0 A8 8 0 0 1 8 0 C8 5.4,2.6 10.6,0 15.4Z" fill="#bdbec0"/>
<path transform="translate(1130.0 558.0)" d="M0 15.4 C-2.6 10.6,-8 5.4,-8 0 A8 8 0 0 1 8 0 C8 5.4,2.6 10.6,0 15.4Z" fill="#bdbec0"/>
<path transform="translate(987.0 586.2)" d="M0 15.4 C-2.6 10.6,-8 5.4,-8 0 A8 8 0 0 1 8 0 C8 5.4,2.6 10.6,0 15.4Z" fill="#a3a5a8"/>
<path transform="translate(989.5 589.0)" d="M0 15.4 C-2.6 10.6,-8 5.4,-8 0 A8 8 0 0 1 8 0 C8 5.4,2.6 10.6,0 15.4Z" fill="#bdbec0"/>
<path transform="translate(996.5 596.8)" d="M0 15.4 C-2.6 10.6,-8 5.4,-8 0 A8 8 0 0 1 8 0 C8 5.4,2.6 10.6,0 15.4Z" fill="#bdbec0"/>
<path transform="translate(1076.0 629.7)" d="M0 15.4 C-2.6 10.6,-8 5.4,-8 0 A8 8 0 0 1 8 0 C8 5.4,2.6 10.6,0 15.4Z" fill="#bdbec0"/>
<path transform="translate(866.6 651.1)" d="M0 15.4 C-2.6 10.6,-8 5.4,-8 0 A8 8 0 0 1 8 0 C8 5.4,2.6 10.6,0 15.4Z" fill="#bdbec0"/>
<path transform="translate(961.6 699.5)" d="M0 15.4 C-2.6 10.6,-8 5.4,-8 0 A8 8 0 0 1 8 0 C8 5.4,2.6 10.6,0 15.4Z" fill="#bdbec0"/>
<path transform="translate(1011.0 748.2)" d="M0 15.4 C-2.6 10.6,-8 5.4,-8 0 A8 8 0 0 1 8 0 C8 5.4,2.6 10.6,0 15.4Z" fill="#a3a5a8"/>
<path transform="translate(1008.0 753.8)" d="M0 15.4 C-2.6 10.6,-8 5.4,-8 0 A8 8 0 0 1 8 0 C8 5.4,2.6 10.6,0 15.4Z" fill="#bdbec0"/>
<path transform="translate(889.9 786.8)" d="M0 15.4 C-2.6 10.6,-8 5.4,-8 0 A8 8 0 0 1 8 0 C8 5.4,2.6 10.6,0 15.4Z" fill="#bdbec0"/>
<path transform="translate(1022.9 790.6)" d="M0 15.4 C-2.6 10.6,-8 5.4,-8 0 A8 8 0 0 1 8 0 C8 5.4,2.6 10.6,0 15.4Z" fill="#bdbec0"/>
<path transform="translate(1063.2 786.8)" d="M0 15.4 C-2.6 10.6,-8 5.4,-8 0 A8 8 0 0 1 8 0 C8 5.4,2.6 10.6,0 15.4Z" fill="#bdbec0"/>
<path transform="translate(683.0 439.2)" d="M0 15.4 C-2.6 10.6,-8 5.4,-8 0 A8 8 0 0 1 8 0 C8 5.4,2.6 10.6,0 15.4Z" fill="#f2a55a"/>
<path transform="translate(797.6 567.7)" d="M0 15.4 C-2.6 10.6,-8 5.4,-8 0 A8 8 0 0 1 8 0 C8 5.4,2.6 10.6,0 15.4Z" fill="#f2a55a"/>
<path transform="translate(919.0 452.9)" d="M0 15.4 C-2.6 10.6,-8 5.4,-8 0 A8 8 0 0 1 8 0 C8 5.4,2.6 10.6,0 15.4Z" fill="#72d283"/>
<path transform="translate(907.3 641.4)" d="M0 15.4 C-2.6 10.6,-8 5.4,-8 0 A8 8 0 0 1 8 0 C8 5.4,2.6 10.6,0 15.4Z" fill="#72d283"/>
<text x="519" y="807.5" fill="#ffffff" stroke="#222" stroke-width="1.2" paint-order="stroke" font-size="20" font-family="Liberation Sans">Google</text>
<rect x="506" y="177" width="2" height="623" fill="#202328"/>
</svg></div>
  <div id="mapctl">
    <div class="abs ctl" style="left:13px;top:12px;width:160px;height:35px"><span style="position:absolute;left:9px;top:10px;font-size:13px;color:#4e4e4e;line-height:15px;-webkit-text-stroke:0.45px #4e4e4e">Street map</span><svg style="position:absolute;left:139px;top:15px" width="9" height="5"><path d="M0 0H9L4.5 5Z" fill="#555"/></svg></div>
    <div class="abs ctl" style="left:185px;top:12px;width:56px;height:35px"><span style="position:absolute;left:10px;top:10px;font-size:13px;color:#4e4e4e;line-height:15px;-webkit-text-stroke:0.45px #4e4e4e">Traffic</span></div>
    <div class="abs ctl" style="left:254px;top:12px;width:35px;height:35px"><svg style="position:absolute;left:10px;top:11px" width="15" height="14" viewBox="0 0 15 14"><circle cx="5.8" cy="5.8" r="4.3" fill="none" stroke="#444" stroke-width="1.9"/><path d="M9 9 L13.2 13.2" stroke="#444" stroke-width="2.2" stroke-linecap="round"/></svg></div>
    <div class="abs ctl" style="left:13px;top:59px;width:33px;height:68px"><svg style="position:absolute;left:0;top:0" width="33" height="68" viewBox="0 0 33 68"><path d="M16.5 10 V24.5 M9 17.3 H24" stroke="#2e2e2e" stroke-width="3.6"/><path d="M0 34.5 H33" stroke="#d2d2d2" stroke-width="1"/><path d="M9 51.5 H24" stroke="#2e2e2e" stroke-width="3.6"/></svg></div>
    <div class="abs ctl" style="left:13px;top:139px;width:33px;height:33px"><svg style="position:absolute;left:0;top:0" width="33" height="33" viewBox="0 0 33 33"><circle cx="16.5" cy="16.5" r="4.8" fill="none" stroke="#333" stroke-width="1.8"/><circle cx="16.5" cy="16.5" r="2.2" fill="#333"/><path d="M16.5 9.3 V11.5 M16.5 21.5 V23.7 M9.3 16.5 H11.5 M21.5 16.5 H23.7" stroke="#333" stroke-width="1.8"/></svg></div>
  </div>
  <div id="rp">
    <div class="abs" style="left:0;top:0;width:440px;height:36px;border-bottom:1px solid #22262b"></div>
    <div class="abs" style="left:368px;top:0;width:1px;height:36px;background:#23272c"></div>
    <svg class="abs" style="left:10px;top:11px" width="17" height="16" viewBox="0 0 17 16"><circle cx="6.5" cy="6.5" r="5" fill="none" stroke="#d6d6d6" stroke-width="2"/><path d="M10.2 10.2 L14.5 14.5" stroke="#d6d6d6" stroke-width="2.4" stroke-linecap="round"/></svg>
    <div class="abs" style="left:36px;top:9px;font-size:16px;color:#e2e2e2;line-height:18px">Search</div>
    <svg class="abs" style="left:388px;top:12px" width="34" height="14" viewBox="0 0 34 14"><path d="M0.5 1.5h2.5M0.5 6.5h2.5M0.5 11.5h2.5M5 1.5h10.5M5 6.5h10.5M5 11.5h10.5" stroke="#f2f2f2" stroke-width="2.4"/><path d="M23 5 H32 L27.5 10Z" fill="#f2f2f2"/></svg>
    <div class="abs" style="left:416px;top:171px;width:9px;height:16px;border-radius:4.5px;background:#d8dadd;border:1px solid #15181c"></div>
<div class="it" style="top:50px"><svg width="13" height="18" viewBox="0 0 13 18"><path d="M6.3 17.6 C4.6 14,0.2 10.5,0.2 6.3 A6.1 6.1 0 0 1 12.4 6.3 C12.4 10.5,8 14,6.3 17.6Z" fill="#a5a7aa"/></svg><div class="a">2261 Jackson St</div><div class="b">Kostas Antetokounmpo</div></div>
<div class="it" style="top:97px"><svg width="13" height="18" viewBox="0 0 13 18"><path d="M6.3 17.6 C4.6 14,0.2 10.5,0.2 6.3 A6.1 6.1 0 0 1 12.4 6.3 C12.4 10.5,8 14,6.3 17.6Z" fill="#a5a7aa"/></svg><div class="a">4666 19th St</div><div class="b">Trevor Ariza</div></div>
<div class="it" style="top:145px"><svg width="13" height="18" viewBox="0 0 13 18"><path d="M6.3 17.6 C4.6 14,0.2 10.5,0.2 6.3 A6.1 6.1 0 0 1 12.4 6.3 C12.4 10.5,8 14,6.3 17.6Z" fill="#a5a7aa"/></svg><div class="a">450 Sutter Street</div><div class="b">Dairis Bertans</div></div>
<div class="it" style="top:192px"><svg width="13" height="18" viewBox="0 0 13 18"><path d="M6.3 17.6 C4.6 14,0.2 10.5,0.2 6.3 A6.1 6.1 0 0 1 12.4 6.3 C12.4 10.5,8 14,6.3 17.6Z" fill="#a5a7aa"/></svg><div class="a">779 San Jose Ave</div><div class="b">Davis Bertans</div></div>
<div class="it" style="top:239px"><svg width="13" height="18" viewBox="0 0 13 18"><path d="M6.3 17.6 C4.6 14,0.2 10.5,0.2 6.3 A6.1 6.1 0 0 1 12.4 6.3 C12.4 10.5,8 14,6.3 17.6Z" fill="#a5a7aa"/></svg><div class="a">3501 Divisadero</div><div class="b">Patrick Beverley</div></div>
<div class="it" style="top:286px"><svg width="13" height="18" viewBox="0 0 13 18"><path d="M6.3 17.6 C4.6 14,0.2 10.5,0.2 6.3 A6.1 6.1 0 0 1 12.4 6.3 C12.4 10.5,8 14,6.3 17.6Z" fill="#a5a7aa"/></svg><div class="a">1499 Sutter Street</div><div class="b">Khem Birch</div></div>
<div class="it" style="top:334px"><svg width="13" height="18" viewBox="0 0 13 18"><path d="M6.3 17.6 C4.6 14,0.2 10.5,0.2 6.3 A6.1 6.1 0 0 1 12.4 6.3 C12.4 10.5,8 14,6.3 17.6Z" fill="#a5a7aa"/></svg><div class="a">518 Rhode Island Street</div><div class="b">Bogdan Bogdanovic</div></div>
<div class="it" style="top:381px"><svg width="13" height="18" viewBox="0 0 13 18"><path d="M6.3 17.6 C4.6 14,0.2 10.5,0.2 6.3 A6.1 6.1 0 0 1 12.4 6.3 C12.4 10.5,8 14,6.3 17.6Z" fill="#a5a7aa"/></svg><div class="a">1333 Gough St Apt 2l</div><div class="b">Andrew Bogut</div></div>
<div class="it" style="top:428px"><svg width="13" height="18" viewBox="0 0 13 18"><path d="M6.3 17.6 C4.6 14,0.2 10.5,0.2 6.3 A6.1 6.1 0 0 1 12.4 6.3 C12.4 10.5,8 14,6.3 17.6Z" fill="#a5a7aa"/></svg><div class="a">186 Albion St</div><div class="b">Devin Booker</div></div>
<div class="it" style="top:475px"><svg width="13" height="18" viewBox="0 0 13 18"><path d="M6.3 17.6 C4.6 14,0.2 10.5,0.2 6.3 A6.1 6.1 0 0 1 12.4 6.3 C12.4 10.5,8 14,6.3 17.6Z" fill="#a5a7aa"/></svg><div class="a">25 Whitney St</div><div class="b">Tony Bradley</div></div>
<div class="it" style="top:523px"><svg width="13" height="18" viewBox="0 0 13 18"><path d="M6.3 17.6 C4.6 14,0.2 10.5,0.2 6.3 A6.1 6.1 0 0 1 12.4 6.3 C12.4 10.5,8 14,6.3 17.6Z" fill="#a5a7aa"/></svg><div class="a">155 5th Street</div><div class="b">Bruce Brown</div></div>
<div class="it" style="top:570px"><svg width="13" height="18" viewBox="0 0 13 18"><path d="M6.3 17.6 C4.6 14,0.2 10.5,0.2 6.3 A6.1 6.1 0 0 1 12.4 6.3 C12.4 10.5,8 14,6.3 17.6Z" fill="#a5a7aa"/></svg><div class="a">879 Florida Street</div><div class="b">Reggie Bullock</div></div>
<div class="it" style="top:617px"><svg width="13" height="18" viewBox="0 0 13 18"><path d="M6.3 17.6 C4.6 14,0.2 10.5,0.2 6.3 A6.1 6.1 0 0 1 12.4 6.3 C12.4 10.5,8 14,6.3 17.6Z" fill="#a5a7aa"/></svg><div class="a">403 Main St</div><div class="b">Jarrett Allen</div></div>
  </div>
  <div class="abs" style="left:296px;top:32.5px;width:23px;height:23px;border-radius:50%;background:#2b2b2d;border:1px solid #3b3b3d;z-index:5"><svg style="position:absolute;left:6px;top:5px" width="10" height="12" viewBox="0 0 10 12"><path d="M7 1.5 L2.8 6 L7 10.5" fill="none" stroke="#cfcfcf" stroke-width="1.8"/></svg></div>
</div>
</body></html>
